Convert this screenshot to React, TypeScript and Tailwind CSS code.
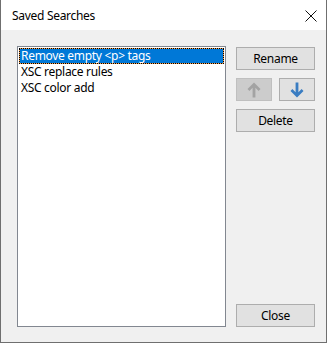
import React from 'react';

const font = { fontFamily: '"Noto Sans", "Liberation Sans", sans-serif' };

const items = ['Remove empty <p> tags', 'XSC replace rules', 'XSC color add'];

const Arrow: React.FC<{ dir: 'up' | 'down'; color: string }> = ({ dir, color }) => (
  <svg width="14" height="16" viewBox="0 0 14 16" className={dir === 'down' ? 'rotate-180' : ''}>
    <path d="M7 0.5 L13.5 7 L11.6 8.9 L8.4 5.7 L8.4 15.5 L5.6 15.5 L5.6 5.7 L2.4 8.9 L0.5 7 Z" fill={color} />
  </svg>
);

export default function App() {
  return (
    <div className="w-[327px] h-[343px] flex flex-col border-x border-b border-[#6f6f6f] text-[12px] tracking-[-0.3px] text-black" style={font}>
      {/* title bar */}
      <div className="h-[30px] bg-white flex items-center justify-between pl-[11px] pr-[9px]">
        <span className="text-[12px] mt-[1px]">Saved Searches</span>
        <svg width="12" height="12" viewBox="0 0 12 12" className="mt-[2px]">
          <path d="M0.5 0.5 L11.5 11.5 M11.5 0.5 L0.5 11.5" stroke="#111" strokeWidth="1" />
        </svg>
      </div>
      {/* body */}
      <div className="flex-1 bg-[#f0f0f0] flex pt-[16px] pl-[16px] pr-[10px] pb-[15px]">
        <div className="w-[209px] border border-[#828790] bg-white p-px">
          {items.map((it, i) =>
            i === 0 ? (
              <div key={it} className="h-[16px] border border-dotted border-black bg-[#f5a04c]">
                <div className="h-full bg-[#0078d7] text-white leading-[14px] pl-[1px] whitespace-pre">{it}</div>
              </div>
            ) : (
              <div key={it} className="h-[16px] leading-[16px] pl-[2px] whitespace-pre">{it}</div>
            )
          )}
        </div>
        <div className="w-[79px] ml-[10px] flex flex-col">
          <button className="h-[23px] mt-[1px] bg-[#e1e1e1] border border-[#adadad] flex items-center justify-center leading-none">Rename</button>
          <div className="flex justify-between mt-[8px]">
            <div className="w-[36px] h-[23px] bg-[#cccccc] border border-[#bfbfbf] flex items-center justify-center">
              <Arrow dir="up" color="#a3a3a3" />
            </div>
            <div className="w-[36px] h-[23px] bg-[#e1e1e1] border border-[#adadad] flex items-center justify-center">
              <Arrow dir="down" color="#3a7dc2" />
            </div>
          </div>
          <button className="h-[23px] mt-[8px] bg-[#e1e1e1] border border-[#adadad] flex items-center justify-center leading-none">Delete</button>
          <button className="h-[23px] mt-auto bg-[#e1e1e1] border border-[#adadad] flex items-center justify-center leading-none">Close</button>
        </div>
      </div>
    </div>
  );
}
